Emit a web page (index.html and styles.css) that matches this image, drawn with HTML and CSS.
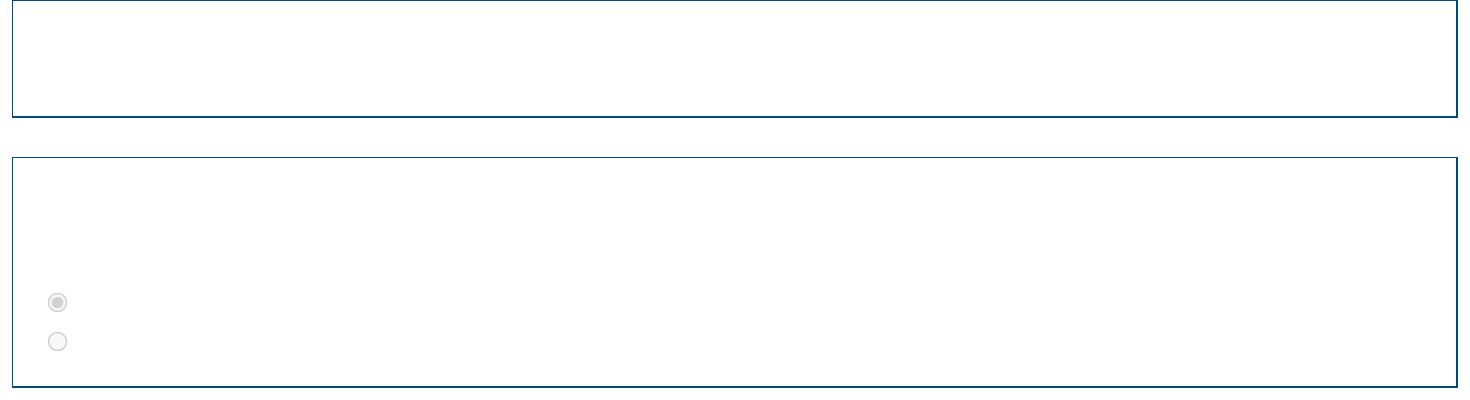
FILE: index.html
```html
<!DOCTYPE html>
<html lang="en">

<head>
  <meta charset="UTF-8">
  <meta name="viewport" content="width=device-width, initial-scale=1.0">
  <title>Question</title>
  <link rel="stylesheet" href="styles.css">
</head>

<body>
  <main>
    <section class="panel panel-intro"></section>

    <section class="panel panel-question">
      <div class="choices">
        <label class="choice">
          <input type="radio" name="answer" value="yes" checked disabled>
        </label>
        <label class="choice">
          <input type="radio" name="answer" value="no" disabled>
        </label>
      </div>
    </section>
  </main>
</body>

</html>
```

FILE: styles.css
```css
body {
  margin: 0;
  background: #fff;
  font-family: "Open Sans", "Liberation Sans", sans-serif;
}

main {
  padding: 0 12px;
  display: flex;
  flex-direction: column;
  gap: 39px;
}

.panel {
  border: solid #004a84;
  border-width: 1px 2px 2px 1px;
  box-sizing: border-box;
}

.panel-intro {
  height: 118px;
}

.panel-question {
  height: 231px;
  padding: 134px 0 0 34px;
}

.choices {
  display: flex;
  flex-direction: column;
  gap: 19px;
}

.choice {
  display: flex;
  align-items: center;
  justify-content: center;
  width: 20px;
  height: 20px;
}

.choice input {
  width: 13px;
  height: 13px;
  margin: 0;
  transform: scale(1.5);
}
```
